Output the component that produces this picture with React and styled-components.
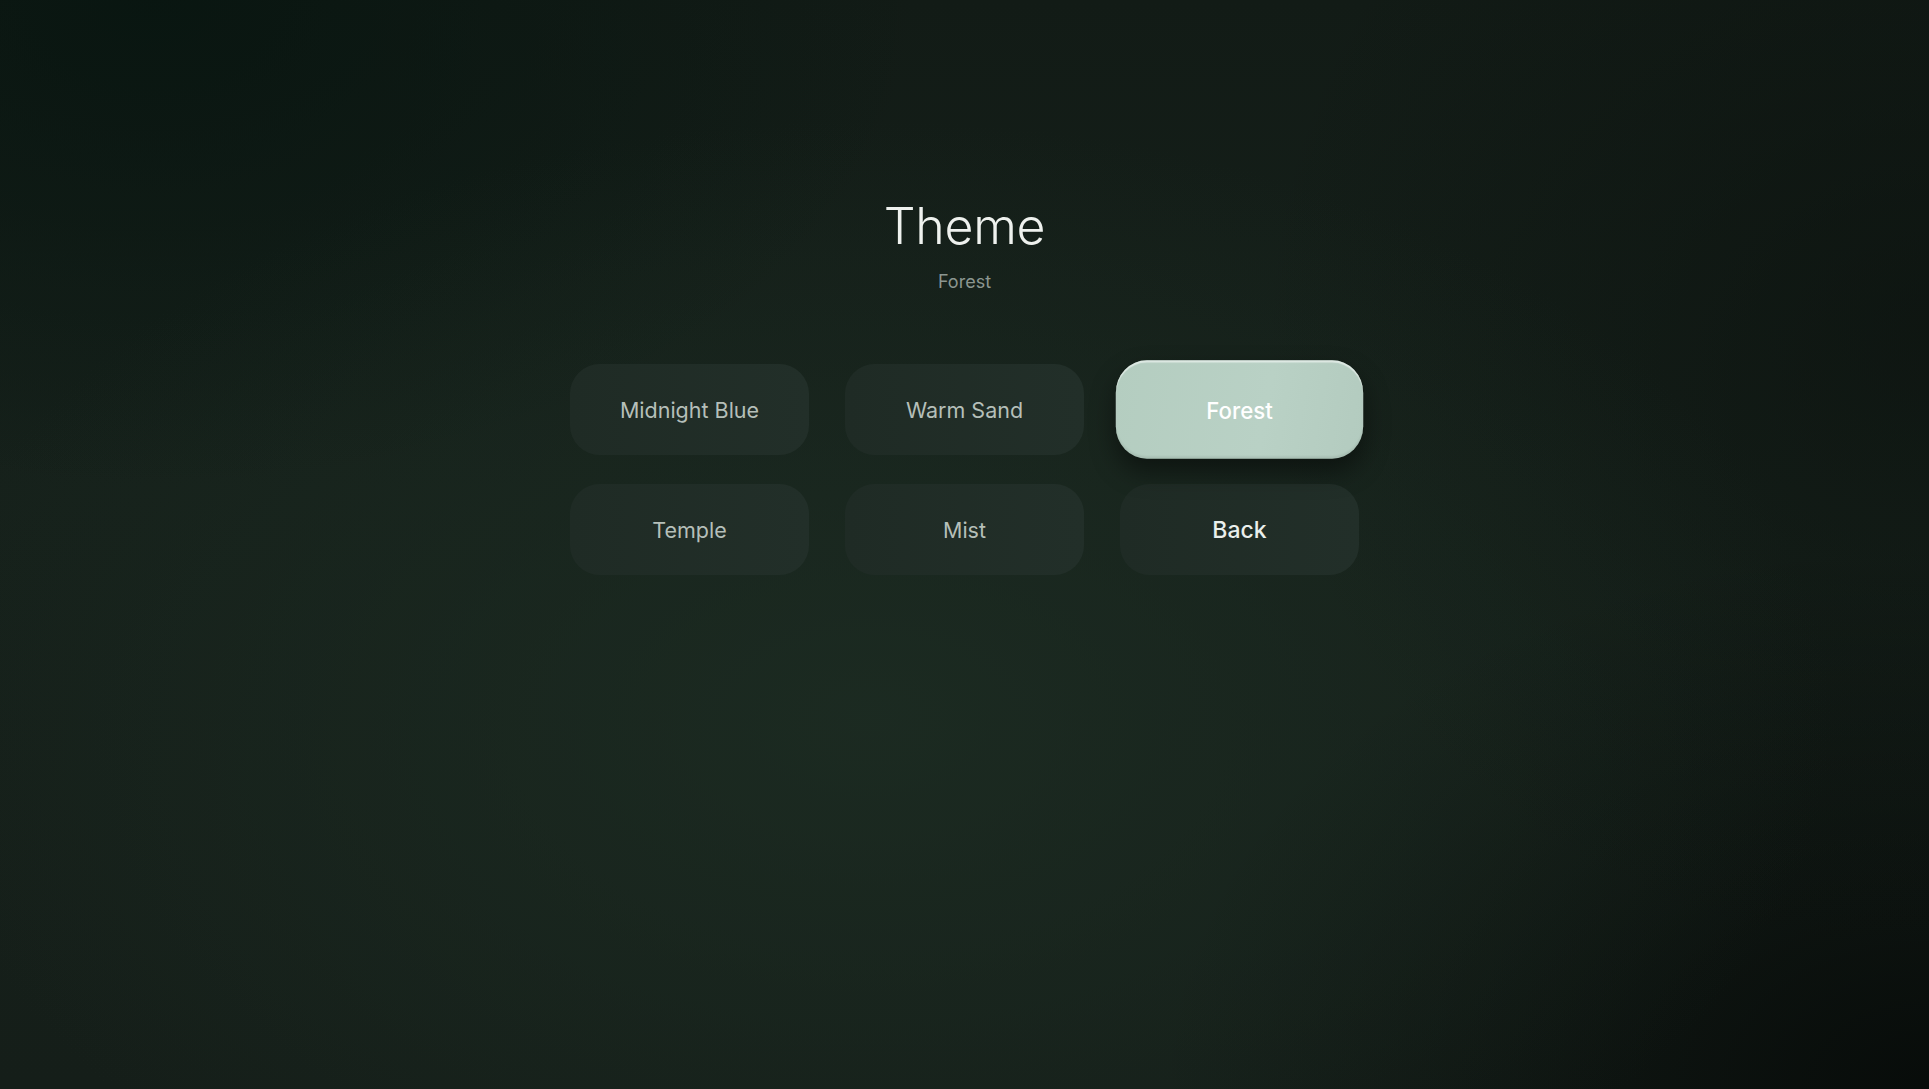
import React from 'react';
import styled, { createGlobalStyle, css } from 'styled-components';

const GlobalStyle = createGlobalStyle`
  html, body, #root {
    margin: 0;
    padding: 0;
    height: 100%;
  }

  body {
    background: #111a15;
    font-family: Inter, "Noto Sans", "Liberation Sans", sans-serif;
    -webkit-font-smoothing: antialiased;
  }
`;

const themes = ['Midnight Blue', 'Warm Sand', 'Forest', 'Temple', 'Mist'];

function App() {
  const current = 'Forest';

  return (
    <Screen>
      <GlobalStyle />
      <Header>
        <Title>Theme</Title>
        <Subtitle>{current}</Subtitle>
      </Header>
      <Grid>
        {themes.map((name) => (
          <Option key={name} $focused={name === current}>{name}</Option>
        ))}
        <Option $back>Back</Option>
      </Grid>
    </Screen>
  );
}

const Screen = styled.main`
  box-sizing: border-box;
  width: 100%;
  min-height: 100vh;
  display: flex;
  flex-direction: column;
  align-items: center;
  padding-top: 201px;
  background:
    radial-gradient(ellipse 50% 55% at 45% 66%, rgba(29, 45, 35, 0.8) 0%, rgba(29, 45, 35, 0) 100%),
    radial-gradient(ellipse 40% 45% at 8% 0%, rgba(6, 20, 15, 0.75) 0%, rgba(6, 20, 15, 0) 100%),
    radial-gradient(ellipse 35% 60% at 100% 30%, rgba(9, 14, 11, 0.55) 0%, rgba(9, 14, 11, 0) 100%),
    radial-gradient(ellipse 40% 50% at 100% 100%, rgba(7, 11, 9, 0.95) 0%, rgba(7, 11, 9, 0) 100%),
    linear-gradient(180deg, #121b16 0%, #16211b 45%, #151e19 100%);
`;

const Header = styled.header`
  display: flex;
  flex-direction: column;
  align-items: center;
  gap: 22px;
`;

const Title = styled.h1`
  margin: 0;
  font-size: 50px;
  line-height: 1;
  font-weight: 300;
  letter-spacing: -0.3px;
  color: #eef1ee;
`;

const Subtitle = styled.p`
  margin: 0;
  font-size: 18px;
  line-height: 1;
  font-weight: 400;
  color: #8b9690;
`;

const Grid = styled.div`
  display: grid;
  grid-template-columns: repeat(3, 239px);
  grid-auto-rows: 91px;
  column-gap: 36px;
  row-gap: 29px;
  margin-top: 73px;
`;

const Option = styled.button`
  display: flex;
  align-items: center;
  justify-content: center;
  border: none;
  border-radius: 30px;
  padding: 0;
  font-family: inherit;
  font-size: 21.5px;
  font-weight: 400;
  color: #b5bfb9;
  background: linear-gradient(90deg, #1f2b25 0%, #222f29 100%);
  cursor: pointer;

  ${({ $back }) => $back && css`
    color: #eaefec;
    font-size: 23px;
    font-weight: 500;
  `}

  ${({ $focused }) => $focused && css`
    color: #ffffff;
    font-weight: 500;
    background: linear-gradient(100deg, #b4cdc0 0%, #b9d1c5 60%, #b3cbbf 100%);
    transform: scale(1.035, 1.08);
    box-shadow:
      inset 0 2px 1px rgba(255, 255, 255, 0.55),
      inset 0 -2px 2px rgba(0, 0, 0, 0.08),
      0 12px 24px rgba(0, 0, 0, 0.45);
  `}
`;

export default App;
